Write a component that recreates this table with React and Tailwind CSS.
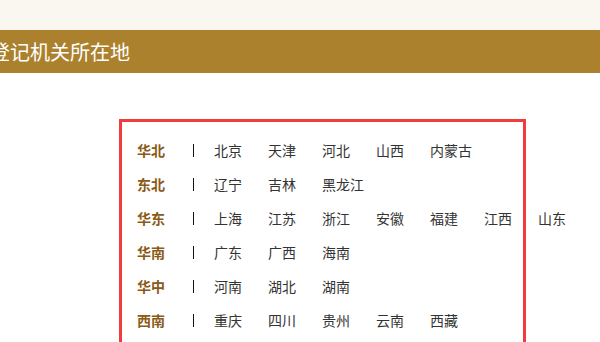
import React from 'react';

const regions = [
  { name: '华北', cities: ['北京', '天津', '河北', '山西', '内蒙古'] },
  { name: '东北', cities: ['辽宁', '吉林', '黑龙江'] },
  { name: '华东', cities: ['上海', '江苏', '浙江', '安徽', '福建', '江西', '山东'] },
  { name: '华南', cities: ['广东', '广西', '海南'] },
  { name: '华中', cities: ['河南', '湖北', '湖南'] },
  { name: '西南', cities: ['重庆', '四川', '贵州', '云南', '西藏'] },
  { name: '西北', cities: ['陕西', '甘肃', '青海', '宁夏', '新疆'] },
];

function RegionRow({ name, cities }) {
  return (
    <div className="flex items-center h-[34px] whitespace-nowrap">
      <span className="w-[28px] shrink-0 text-[14px] font-bold text-[#8a5a17]">{name}</span>
      <span className="ml-[28px] mr-[20px] w-px h-[13px] shrink-0 bg-[#111]" />
      {cities.map((c) => (
        <a key={c} href="#" className="shrink-0 mr-[26px] text-[14px] text-[#333]">
          {c}
        </a>
      ))}
    </div>
  );
}

export default function App() {
  return (
    <div className="w-[600px] h-[342px] overflow-hidden bg-white font-['Noto_Sans_CJK_SC',sans-serif]">
      <div className="h-[30px] bg-[#faf7f0]" />
      <div className="h-[43px] bg-[#ac812e] flex items-center">
        <h2 className="ml-[-10px] mt-[1px] text-[20px] text-white whitespace-nowrap leading-none">登记机关所在地</h2>
      </div>

      {/* region list */}
      <div className="ml-[119px] mt-[46px] w-[407px] border-[3px] border-[#f23c3c] pl-[15px] pt-[11px] pb-[12px]">
        {regions.map((r) => (
          <RegionRow key={r.name} {...r} />
        ))}
      </div>
    </div>
  );
}
